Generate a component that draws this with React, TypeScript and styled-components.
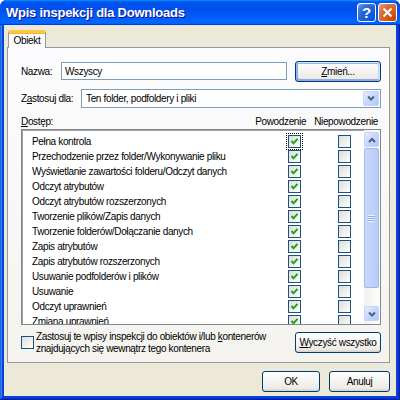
import React from 'react';
import styled, { createGlobalStyle, css } from 'styled-components';

const GlobalStyle = createGlobalStyle`
  html, body {
    margin: 0;
    padding: 0;
    background: #fff;
  }
  body {
    font-family: "Liberation Sans", Arial, sans-serif;
    font-size: 10px;
    letter-spacing: -0.35px;
    color: #000;
  }
  * {
    box-sizing: border-box;
  }
`;

const permissions = [
  'Pełna kontrola',
  'Przechodzenie przez folder/Wykonywanie pliku',
  'Wyświetlanie zawartości folderu/Odczyt danych',
  'Odczyt atrybutów',
  'Odczyt atrybutów rozszerzonych',
  'Tworzenie plików/Zapis danych',
  'Tworzenie folderów/Dołączanie danych',
  'Zapis atrybutów',
  'Zapis atrybutów rozszerzonych',
  'Usuwanie podfolderów i plików',
  'Usuwanie',
  'Odczyt uprawnień',
  'Zmiana uprawnień',
  'Przejęcie na własność',
];

const Chevron: React.FC<{ up?: boolean }> = ({ up }) => (
  <svg width="8" height="6" viewBox="0 0 8 6">
    <path
      d={up ? 'M1 5 L4 2 L7 5' : 'M1 1.5 L4 4.5 L7 1.5'}
      fill="none"
      stroke="#4d6185"
      strokeWidth="2"
    />
  </svg>
);

const Tick = () => (
  <svg width="9" height="9" viewBox="0 0 9 9">
    <path d="M1.5 4 L3.5 6.3 L7.5 1.8" fill="none" stroke="#21a121" strokeWidth="2" />
  </svg>
);

const Box: React.FC<{ checked?: boolean; focused?: boolean }> = ({ checked, focused }) => (
  <CheckBox $focused={focused}>{checked && <Tick />}</CheckBox>
);

export default function App() {
  return (
    <>
      <GlobalStyle />
      <Window>
        <TitleBar>
          <Title>Wpis inspekcji dla Downloads</Title>
          <TitleButtons>
            <HelpButton>?</HelpButton>
            <CloseButton>
              <svg width="11" height="11" viewBox="0 0 11 11">
                <path d="M1.5 1.5 L9.5 9.5 M9.5 1.5 L1.5 9.5" stroke="#fff" strokeWidth="2" />
              </svg>
            </CloseButton>
          </TitleButtons>
        </TitleBar>
        <Body>
          <TabStrip>
            <Tab>Obiekt</Tab>
          </TabStrip>
          <Panel>
            <NameRow>
              <Label $width={40}>Nazwa:</Label>
              <TextBox>Wszyscy</TextBox>
              <Button $focused $width={86}>
                <u>Z</u>mień...
              </Button>
            </NameRow>
            <ApplyRow>
              <Label $width={60}>
                Z<u>a</u>stosuj dla:
              </Label>
              <Select>
                <SelectText>Ten folder, podfoldery i pliki</SelectText>
                <SelectArrow>
                  <Chevron />
                </SelectArrow>
              </Select>
            </ApplyRow>
            <HeaderRow>
              <HeaderLabel>
                <u>D</u>ostęp:
              </HeaderLabel>
              <ColumnTitle>Powodzenie</ColumnTitle>
              <ColumnTitle>Niepowodzenie</ColumnTitle>
            </HeaderRow>
            <ListBox>
              <Rows>
                {permissions.map((name, i) => (
                  <Row key={name}>
                    <RowName>{name}</RowName>
                    <Box checked focused={i === 0} />
                    <Box />
                  </Row>
                ))}
              </Rows>
              <ScrollBar>
                <ScrollButton>
                  <Chevron up />
                </ScrollButton>
                <Thumb>
                  <Grip />
                </Thumb>
                <Track />
                <ScrollButton>
                  <Chevron />
                </ScrollButton>
              </ScrollBar>
            </ListBox>
            <BottomRow>
              <InheritOption>
                <Box />
                <InheritText>
                  Zastosuj te wpisy inspekcji do obiektów i/lub <u>k</u>ontenerów
                  <br />
                  znajdujących się wewnątrz tego kontenera
                </InheritText>
              </InheritOption>
              <Button $width={86}>
                <u>W</u>yczyść wszystko
              </Button>
            </BottomRow>
          </Panel>
          <Footer>
            <Button $width={58}>OK</Button>
            <Button $width={61}>Anuluj</Button>
          </Footer>
        </Body>
      </Window>
    </>
  );
}

const Window = styled.div`
  width: 400px;
  height: 400px;
  display: flex;
  flex-direction: column;
  background: #0842d8;
  border-radius: 7px 7px 0 0;
  overflow: hidden;
  box-shadow: inset -1px -1px #001ea0, inset 1px 1px #166aee, inset -2px -2px #0831d9, inset 2px 2px #3c7ff4;
`;

const TitleBar = styled.div`
  height: 25px;
  flex: none;
  display: flex;
  align-items: center;
  justify-content: space-between;
  padding: 0 3px 0 6px;
  background: linear-gradient(
    180deg,
    #0997ff,
    #0053ee 8%,
    #0050ee 40%,
    #0066ff 88%,
    #0066ff 93%,
    #005bff 95%,
    #003dd7 96%,
    #003dd7
  );
`;

const Title = styled.span`
  color: #fff;
  font-weight: bold;
  font-size: 13px;
  letter-spacing: -0.25px;
  text-shadow: 1px 1px #0f1089;
`;

const TitleButtons = styled.div`
  display: flex;
  gap: 2px;
`;

const titleButton = css`
  width: 19px;
  height: 19px;
  border: 1px solid #fff;
  border-radius: 3px;
  display: flex;
  align-items: center;
  justify-content: center;
  color: #fff;
`;

const HelpButton = styled.div`
  ${titleButton};
  font-weight: bold;
  font-size: 15px;
  letter-spacing: 0;
  background: radial-gradient(circle at 90% 90%, #0054e9 0%, #2263d5 55%, #4479e4 80%, #a3bbec 100%);
`;

const CloseButton = styled.div`
  ${titleButton};
  background: radial-gradient(circle at 90% 90%, #cc4600 0%, #dc6527 55%, #cd7546 70%, #f0a383 100%);
`;

const Body = styled.div`
  flex: 1;
  margin: 0 4px 4px;
  background: #ece9d8;
  display: flex;
  flex-direction: column;
  padding: 5px 6px 0 3px;
`;

const TabStrip = styled.div`
  display: flex;
  padding-left: 1px;
  height: 18px;
  flex: none;
  position: relative;
  z-index: 1;
`;

const Tab = styled.div`
  width: 38px;
  height: 18px;
  background: #fcfcfe;
  border: 1px solid #919b9c;
  border-bottom: none;
  border-top: 3px solid #ffc83c;
  border-radius: 3px 3px 0 0;
  box-shadow: inset 0 1px 0 #f8b43a;
  display: flex;
  align-items: center;
  justify-content: center;
  padding-bottom: 1px;
`;

const Panel = styled.div`
  flex: 1;
  margin-top: -1px;
  border: 1px solid #919b9c;
  background: linear-gradient(180deg, #fcfcfe, #f4f3ee);
  display: flex;
  flex-direction: column;
  padding: 13px 8px 6px 13px;
`;

const NameRow = styled.div`
  display: flex;
  align-items: center;
  height: 20px;
  & > button {
    margin-left: 8px;
  }
`;

const ApplyRow = styled.div`
  display: flex;
  align-items: center;
  height: 18px;
  margin-top: 8px;
`;

const Label = styled.span<{ $width: number }>`
  width: ${p => p.$width}px;
  flex: none;
  white-space: nowrap;
`;

const TextBox = styled.div`
  flex: 1;
  height: 18px;
  border: 1px solid #7f9db9;
  background: #fff;
  display: flex;
  align-items: center;
  padding-left: 3px;
`;

const Select = styled.div`
  flex: 1;
  height: 19px;
  border: 1px solid #7f9db9;
  background: #fff;
  display: flex;
  align-items: center;
  padding: 1px;
`;

const SelectText = styled.span`
  flex: 1;
  padding-left: 3px;
`;

const scrollButton = css`
  display: flex;
  align-items: center;
  justify-content: center;
  border: 1px solid #c3d3fd;
  border-radius: 2px;
  background: linear-gradient(135deg, #e6eefc 0%, #c7d7fc 50%, #b3c8f5 100%);
`;

const SelectArrow = styled.div`
  ${scrollButton};
  width: 16px;
  height: 15px;
`;

const Button = styled.button<{ $width: number; $focused?: boolean }>`
  width: ${p => p.$width}px;
  height: 21px;
  flex: none;
  font: inherit;
  letter-spacing: inherit;
  color: #000;
  padding: 0;
  border: 1px solid #003c74;
  border-radius: 3px;
  background: linear-gradient(180deg, #fff, #ecebe6 86%, #d6d0c5);
  white-space: nowrap;
  ${p =>
    p.$focused &&
    css`
      box-shadow: inset -1px 1px #cee7ff, inset 1px 2px #98b8ea, inset -2px 2px #bcd4f6, inset 1px -1px #89ade4,
        inset 2px -2px #89ade4;
    `}
`;

const HeaderRow = styled.div`
  display: flex;
  align-items: center;
  height: 13px;
  margin-top: 8px;
  padding-right: 3px;
  gap: 8px;
`;

const HeaderLabel = styled.span`
  flex: 1;
`;

const ColumnTitle = styled.span`
  white-space: nowrap;
`;

const ListBox = styled.div`
  height: 196px;
  margin-top: 1px;
  flex: none;
  display: flex;
  background: #fff;
  border: 1px solid #828790;
  box-shadow: inset 1px 1px #a0a0a0;
  overflow: hidden;
`;

const Rows = styled.div`
  flex: 1;
  min-width: 0;
  padding: 4px 13px 0 10px;
  overflow: hidden;
`;

const Row = styled.div`
  display: grid;
  grid-template-columns: minmax(0, 1fr) 13px 13px;
  column-gap: 37px;
  align-items: center;
  height: 15px;
`;

const RowName = styled.span`
  white-space: nowrap;
  overflow: hidden;
`;

const CheckBox = styled.span<{ $focused?: boolean }>`
  width: 13px;
  height: 13px;
  border: 1px solid #1c5180;
  background: linear-gradient(135deg, #dcdcd7, #fff);
  display: flex;
  align-items: center;
  justify-content: center;
  flex: none;
  ${p =>
    p.$focused &&
    css`
      outline: 1px dotted #000;
      outline-offset: 1px;
    `}
`;

const ScrollBar = styled.div`
  width: 16px;
  flex: none;
  display: flex;
  flex-direction: column;
  padding: 2px 1px 3px 0;
  background: linear-gradient(90deg, #f3f1ec, #fefefb);
`;

const ScrollButton = styled.div`
  ${scrollButton};
  height: 15px;
  flex: none;
`;

const Thumb = styled.div`
  height: 140px;
  margin-top: 1px;
  border: 1px solid #9eb7ee;
  border-radius: 2px;
  background: linear-gradient(90deg, #c9d8fc, #b8ccf7);
  display: flex;
  align-items: center;
  justify-content: center;
`;

const Grip = styled.div`
  width: 7px;
  height: 7px;
  background: repeating-linear-gradient(180deg, #eef4fe 0, #eef4fe 1px, #8caae6 1px, #8caae6 2px);
`;

const Track = styled.div`
  flex: 1;
`;

const BottomRow = styled.div`
  display: flex;
  align-items: center;
  justify-content: space-between;
  margin-top: 5px;
  height: 25px;
`;

const InheritOption = styled.div`
  display: flex;
  align-items: center;
  gap: 2px;
`;

const InheritText = styled.span`
  line-height: 12px;
  white-space: nowrap;
`;

const Footer = styled.div`
  height: 33px;
  flex: none;
  display: flex;
  justify-content: flex-end;
  align-items: flex-start;
  gap: 9px;
  padding-top: 8px;
`;
